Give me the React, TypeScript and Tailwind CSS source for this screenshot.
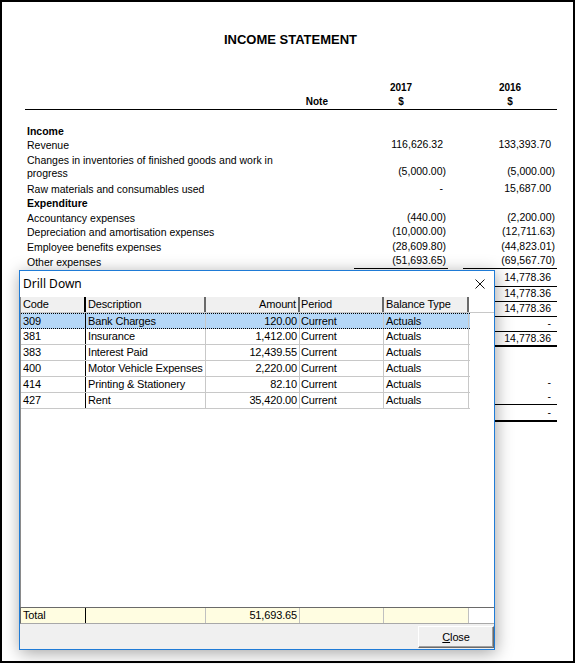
import React from "react";

type Row = {
  label: React.ReactNode;
  bold?: boolean;
  v1?: string;
  v2?: string;
  h: string;
  line?: string;
  twoLine?: boolean;
};

const rows: Row[] = [
  { label: "Income", bold: true, h: "h-[14px]" },
  { label: "Revenue", v1: "116,626.32", v2: "133,393.70", h: "h-[14px]" },
  {
    label: (
      <>
        Changes in inventories of finished goods and work in
        <br />
        progress
      </>
    ),
    v1: "(5,000.00)",
    v2: "(5,000.00)",
    h: "h-[29px]",
    twoLine: true,
  },
  { label: "Raw materials and consumables used", v1: "-", v2: "15,687.00", h: "h-[15px]" },
  { label: "Expenditure", bold: true, h: "h-[14px]" },
  { label: "Accountancy expenses", v1: "(440.00)", v2: "(2,200.00)", h: "h-[15px]" },
  { label: "Depreciation and amortisation expenses", v1: "(10,000.00)", v2: "(12,711.63)", h: "h-[14px]" },
  { label: "Employee benefits expenses", v1: "(28,609.80)", v2: "(44,823.01)", h: "h-[15px]" },
  { label: "Other expenses", v1: "(51,693.65)", v2: "(69,567.70)", h: "h-[15px]", line: "border-b border-black" },
];

// rows below "Other expenses" — only the right edge shows past the dialog
const lowerRows: Row[] = [
  { label: "", v2: "14,778.36", h: "h-[18px]", line: "border-b border-black" },
  { label: "", v2: "14,778.36", h: "h-[15px]", line: "border-b border-black" },
  { label: "", v2: "14,778.36", h: "h-[15px]", line: "border-b border-black" },
  { label: "", v2: "-", h: "h-[15px]", line: "border-b border-black" },
  { label: "", v2: "14,778.36", h: "h-[15px]", line: "border-b-2 border-black" },
];

const lowerRows2: Row[] = [
  { label: "", v2: "-", h: "h-[14px]" },
  { label: "", v2: "-", h: "h-[15px]", line: "border-b border-black" },
  { label: "", v2: "-", h: "h-[17px]", line: "border-b-2 border-black" },
];

function Num({ v, col }: { v?: string; col: 1 | 2 }) {
  if (!v) return null;
  const paren = v.startsWith("(");
  const pad = paren ? "pr-[2px]" : col === 1 ? "pr-[5px]" : "pr-[6px]";
  return <span className={pad}>{v}</span>;
}

function ReportRow({ r }: { r: Row }) {
  const valueAlign = r.twoLine ? "items-end pb-[1px]" : "items-center";
  return (
    <div className={`flex ${r.h}`}>
      <div
        className={`w-[265px] pl-[2px] whitespace-nowrap ${r.twoLine ? "pt-[2px] leading-[13px]" : "flex items-center leading-[14px]"} ${r.bold ? "font-bold" : ""}`}
      >
        {r.label}
      </div>
      <div className="w-[64px]" />
      <div className={`w-[94px] flex justify-end ${valueAlign} ${r.line ?? ""}`}>
        <Num v={r.v1} col={1} />
      </div>
      <div className="w-[15px]" />
      <div className={`w-[94px] flex justify-end ${valueAlign} ${r.line ?? ""}`}>
        <Num v={r.v2} col={2} />
      </div>
    </div>
  );
}

const cols = [
  { key: "code", title: "Code", w: "w-[65px]", align: "text-left pl-[2px]" },
  { key: "desc", title: "Description", w: "w-[120px]", align: "text-left pl-[2px]" },
  { key: "amount", title: "Amount", w: "w-[94px]", align: "text-right pr-[2px]" },
  { key: "period", title: "Period", w: "w-[84px]", align: "text-left pl-[1px]" },
  { key: "type", title: "Balance Type", w: "w-[85px]", align: "text-left pl-[2px]" },
];

const entries = [
  ["309", "Bank Charges", "120.00", "Current", "Actuals"],
  ["381", "Insurance", "1,412.00", "Current", "Actuals"],
  ["383", "Interest Paid", "12,439.55", "Current", "Actuals"],
  ["400", "Motor Vehicle Expenses", "2,220.00", "Current", "Actuals"],
  ["414", "Printing & Stationery", "82.10", "Current", "Actuals"],
  ["427", "Rent", "35,420.00", "Current", "Actuals"],
];

function DrillDown() {
  return (
    <div className="absolute left-[19px] top-[270px] w-[476px] h-[380px] border border-[#1f7bd6] bg-white flex flex-col shadow-[1px_3px_16px_rgba(0,0,0,0.36)] font-['Liberation_Sans',Arial,sans-serif] text-[11px] text-black tracking-[-0.15px]">
      {/* title bar */}
      <div className="h-[26px] shrink-0 flex items-center justify-between pl-[3px] pr-[9px]">
        <span className="font-['Noto_Sans',sans-serif] text-[12px] tracking-normal leading-none text-black">Drill Down</span>
        <svg width="10" height="10" viewBox="0 0 10 10" aria-hidden="true">
          <path d="M0.5 0.5L9.5 9.5M9.5 0.5L0.5 9.5" stroke="#111" strokeWidth="1" />
        </svg>
      </div>

      {/* grid */}
      <div className="flex-1 border-l border-[#8a8a8a] bg-white">
        <div className="flex h-[16px] border-b border-[#c8c8c8]">
          {cols.map((c, i) => (
            <div
              key={c.key}
              className={`${c.w} ${c.align} bg-[#f0f0f0] leading-[15px] border-r-2 ${i === 0 ? "border-black" : "border-[#6a6a6a]"}`}
            >
              {c.title}
            </div>
          ))}
        </div>
        {entries.map((e, ri) => {
          const sel = ri === 0;
          return (
            <div
              key={e[0]}
              className={`flex h-[16px] w-[449px] ${sel ? "bg-[#b5d7f7] border-y border-dotted border-black" : "border-b border-[#c8c8c8]"}`}
            >
              {cols.map((c, i) => (
                <div
                  key={c.key}
                  className={`${c.w} ${c.align} ${sel ? "leading-[14px]" : "leading-[15px]"} border-r ${i === 0 ? "border-black" : "border-[#c8c8c8]"} whitespace-nowrap overflow-hidden`}
                >
                  {e[i]}
                </div>
              ))}
            </div>
          );
        })}
      </div>

      {/* total row */}
      <div className="h-[17px] shrink-0 flex border-l border-y border-l-[#6a6a6a] border-t-[#6a6a6a] border-b-[#a8a8a8]">
        {cols.map((c, i) => (
          <div
            key={c.key}
            className={`${c.w} ${c.align} bg-[#fffde1] leading-[15px] border-r ${i === 0 ? "border-black" : "border-[#c0c0c0]"}`}
          >
            {i === 0 ? "Total" : i === 2 ? "51,693.65" : ""}
          </div>
        ))}
        <div className="flex-1 bg-white" />
      </div>

      {/* button bar */}
      <div className="h-[25px] shrink-0 bg-[#f0f0f0] flex justify-end items-start pt-[2px]">
        <button
          type="button"
          className="w-[76px] h-[22px] bg-[#f0f0f0] border border-t-white border-l-white border-r-[#6a6a6a] border-b-[#6a6a6a] shadow-[inset_-1px_-1px_0_#a0a0a0] leading-[19px] text-center text-black"
        >
          <span className="underline underline-offset-[1px]">C</span>lose
        </button>
      </div>
    </div>
  );
}

export default function App() {
  return (
    <div className="relative w-[576px] h-[664px] bg-white overflow-hidden">
      <div className="w-[575px] h-[663px] border-2 border-black bg-white font-['Liberation_Sans',Arial,sans-serif] text-[10.5px] text-black">
        <div className="mt-[29px] h-[18px] leading-[18px] text-center text-[13px] font-bold pl-[6px]">
          INCOME STATEMENT
        </div>

        <div className="ml-[23px] w-[532px]">
          {/* column headings */}
          <div className="mt-[32px] border-b border-black font-bold text-[10px]">
            <div className="flex h-[14px] leading-[14px]">
              <div className="w-[329px]" />
              <div className="w-[94px] text-center">2017</div>
              <div className="w-[15px]" />
              <div className="w-[94px] text-center">2016</div>
            </div>
            <div className="flex h-[14px] leading-[14px]">
              <div className="w-[265px]" />
              <div className="w-[40px] text-right pr-[2px]">Note</div>
              <div className="w-[24px]" />
              <div className="w-[94px] text-center">$</div>
              <div className="w-[15px]" />
              <div className="w-[94px] text-center">$</div>
            </div>
          </div>

          <div className="mt-[14px]">
            {rows.map((r, i) => (
              <ReportRow key={i} r={r} />
            ))}
            {lowerRows.map((r, i) => (
              <ReportRow key={`a${i}`} r={r} />
            ))}
            <div className="h-[29px]" />
            {lowerRows2.map((r, i) => (
              <ReportRow key={`b${i}`} r={r} />
            ))}
          </div>
        </div>
      </div>

      <DrillDown />
    </div>
  );
}
